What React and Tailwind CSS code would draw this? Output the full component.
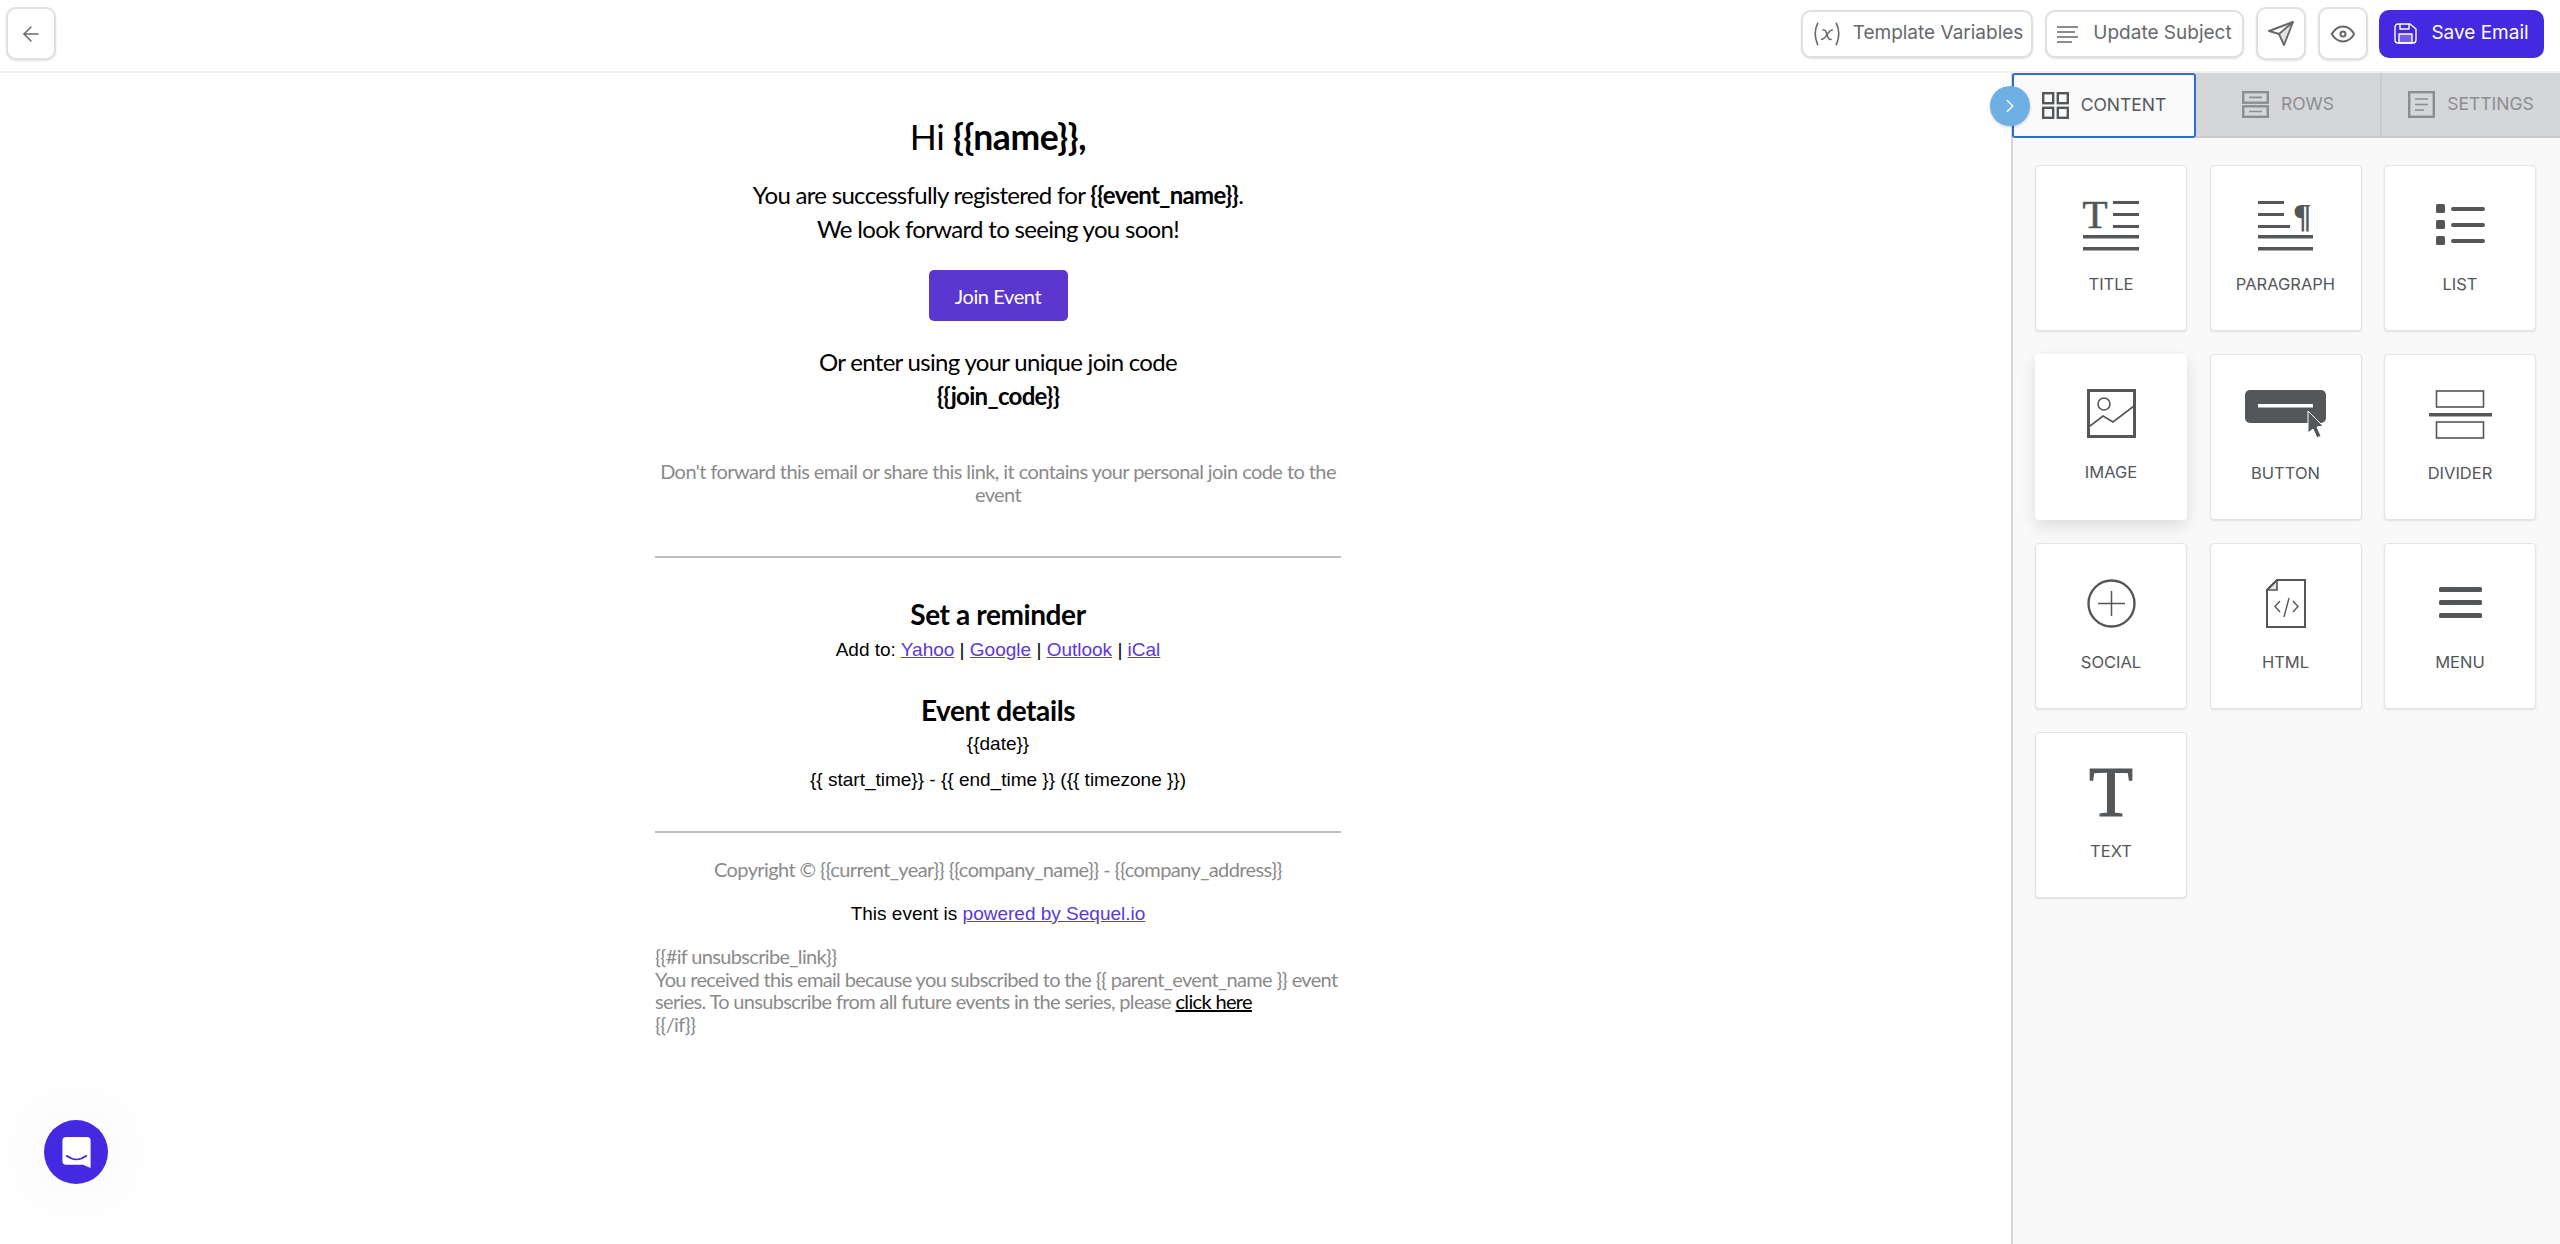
import { ArrowLeft, ChevronRight } from 'lucide-react';

const ICON = '#53575a';
const lato = { fontFamily: 'Lato, sans-serif' };
const arial = { fontFamily: 'Liberation Sans, sans-serif' };

// widget tile icons, drawn on the pixel grid of the tile
function TitleIcon() {
  return (
    <svg width="56" height="50" viewBox="0 0 56 50" fill={ICON} className="overflow-visible">
      <text x="-0.5" y="28" fontFamily="Liberation Serif" fontSize="41" stroke={ICON} strokeWidth="0.6">T</text>
      <rect x="30" y="1" width="26" height="3" />
      <rect x="30" y="13" width="26" height="3" />
      <rect x="30" y="25" width="26" height="3" />
      <rect x="0" y="35" width="56" height="3.5" />
      <rect x="0" y="47" width="56" height="3.5" />
    </svg>
  );
}

function ParagraphIcon() {
  return (
    <svg width="56" height="50" viewBox="0 0 56 50" fill={ICON} className="overflow-visible">
      <rect x="0" y="1" width="26" height="3" />
      <rect x="0" y="13" width="26" height="3" />
      <rect x="0" y="25" width="32" height="3" />
      <text x="35" y="27" fontFamily="Liberation Serif" fontWeight="700" fontSize="34">¶</text>
      <rect x="0" y="35" width="55" height="3.5" />
      <rect x="0" y="47" width="55" height="3.5" />
    </svg>
  );
}

function ListIcon() {
  return (
    <svg width="49" height="42" viewBox="0 0 49 42" fill={ICON}>
      <rect x="0" y="0" width="9" height="9" rx="1.5" />
      <rect x="0" y="16" width="9" height="9" rx="1.5" />
      <rect x="0" y="32" width="9" height="9" rx="1.5" />
      <rect x="15" y="3" width="34" height="4" rx="2" />
      <rect x="15" y="19" width="34" height="4" rx="2" />
      <rect x="15" y="35" width="34" height="4" rx="2" />
    </svg>
  );
}

function ImageIcon() {
  return (
    <svg width="49" height="49" viewBox="0 0 49 49" fill="none" stroke={ICON}>
      <rect x="1.5" y="1.5" width="46" height="46" strokeWidth="3" />
      <circle cx="17" cy="15" r="6" strokeWidth="1.6" />
      <path d="M3 37 L16 27 L26 33 L47 17" strokeWidth="1.6" />
    </svg>
  );
}

function ButtonIcon() {
  return (
    <svg width="82" height="50" viewBox="0 0 82 50">
      <path d="M5 1 H76 A5 5 0 0 1 81 6 V29 A5 5 0 0 1 76 34 H5 A5 5 0 0 1 0 29 V6 A5 5 0 0 1 5 1 Z" fill={ICON} />
      <rect x="13" y="15" width="55" height="3.5" fill="#fff" />
      <path d="M63 22 L63 44 L68 40 L72 49 L76 47 L72 38 L78 37 Z" fill={ICON} stroke="#fff" strokeWidth="1" />
    </svg>
  );
}

function DividerIcon() {
  return (
    <svg width="63" height="49" viewBox="0 0 63 49" fill="none" stroke={ICON} strokeWidth="1.6">
      <rect x="7.5" y="1" width="47" height="16" />
      <rect x="7.5" y="32" width="47" height="16" />
      <rect x="0" y="23" width="63" height="3.5" fill={ICON} stroke="none" />
    </svg>
  );
}

function SocialIcon() {
  return (
    <svg width="49" height="49" viewBox="0 0 49 49" fill="none" stroke={ICON}>
      <circle cx="24.5" cy="24.5" r="23" strokeWidth="2.4" />
      <path d="M24.5 12 V37 M11 24.5 H38" strokeWidth="1.5" />
    </svg>
  );
}

function HtmlIcon() {
  return (
    <svg width="40" height="49" viewBox="0 0 40 49" fill="none" stroke={ICON}>
      <path d="M11 1 H39 V48 H1 V11 Z" strokeWidth="2" />
      <path d="M11 1 V11 H1 Z" fill={ICON} fillOpacity="0.15" strokeWidth="1.6" />
      <path d="M14 22 L9 27.5 L14 33 M27 22 L32 27.5 L27 33 M23 19 L18 38" strokeWidth="1.4" />
    </svg>
  );
}

function MenuIcon() {
  return (
    <svg width="43" height="32" viewBox="0 0 43 32" fill={ICON}>
      <rect x="0" y="0" width="43" height="5" rx="1.5" />
      <rect x="0" y="13" width="43" height="5" rx="1.5" />
      <rect x="0" y="26" width="43" height="5" rx="1.5" />
    </svg>
  );
}

function TextIcon() {
  return (
    <svg width="46" height="50" viewBox="0 0 46 50" fill={ICON} className="overflow-visible">
      <text x="23" y="49" textAnchor="middle" fontFamily="Liberation Serif" fontSize="72" stroke={ICON} strokeWidth="1.2">T</text>
    </svg>
  );
}

const widgets = [
  { label: 'TITLE', icon: TitleIcon },
  { label: 'PARAGRAPH', icon: ParagraphIcon },
  { label: 'LIST', icon: ListIcon },
  { label: 'IMAGE', icon: ImageIcon, raised: true },
  { label: 'BUTTON', icon: ButtonIcon },
  { label: 'DIVIDER', icon: DividerIcon },
  { label: 'SOCIAL', icon: SocialIcon },
  { label: 'HTML', icon: HtmlIcon },
  { label: 'MENU', icon: MenuIcon },
  { label: 'TEXT', icon: TextIcon },
];

function ToolButton({ children, className = '' }) {
  return (
    <button className={`flex items-center justify-center rounded-[10px] border-2 border-[#e0e0e0] bg-white text-[#66696c] shadow-[0_1px_2px_rgba(0,0,0,0.12)] ${className}`}>
      {children}
    </button>
  );
}

function Header() {
  return (
    <header className="flex h-[73px] items-center justify-between border-b-2 border-[#f2f2f2] pb-[4px] pl-[6px] pr-4">
      <ToolButton className="h-[53px] w-[50px]">
        <ArrowLeft size={24} strokeWidth={1.5} />
      </ToolButton>
      <div className="flex items-center gap-3" style={{ fontFamily: 'Inter, sans-serif' }}>
        <ToolButton className="h-[48px] w-[232px] gap-[10px] text-[19px]">
          <svg width="32" height="32" viewBox="0 0 24 24" fill="none" stroke="currentColor" strokeWidth="1.2" strokeLinecap="round">
            <path d="M5 4c-2.5 5 -2.5 10 0 16m14 -16c2.5 5 2.5 10 0 16m-10 -11h1c1 0 1 1 2.016 3.527c.984 2.473 .984 3.473 1.984 3.473h1" />
            <path d="M8 16c1.5 0 3 -2 4 -3.5s2.5 -3.5 4 -3.5" />
          </svg>
          <span>Template Variables</span>
        </ToolButton>
        <ToolButton className="h-[48px] w-[199px] gap-[15px] text-[19px]">
          <svg width="21" height="18" viewBox="0 0 21 18" fill="none" stroke="currentColor" strokeWidth="1.6">
            <path d="M0 2 H21 M0 7 H18 M0 12 H21 M0 17 H15" />
          </svg>
          <span>Update Subject</span>
        </ToolButton>
        <ToolButton className="h-[53px] w-[50px]">
          <svg width="26" height="25" viewBox="-1 -1 26 25" fill="none" stroke="currentColor" strokeWidth="1.9" strokeLinejoin="round">
            <path d="M24 0 L10 12 L15 23 Z" fill="#e3e3e3" />
            <path d="M24 0 L0 9 L10 12" />
          </svg>
        </ToolButton>
        <ToolButton className="h-[53px] w-[50px]">
          <svg width="30" height="30" viewBox="0 0 24 24" fill="none" stroke="currentColor" strokeWidth="1.6">
            <path d="M10 12a2 2 0 1 0 4 0a2 2 0 0 0 -4 0" />
            <path d="M21 12c-2.4 4 -5.4 6 -9 6c-3.6 0 -6.6 -2 -9 -6c2.4 -4 5.4 -6 9 -6c3.6 0 6.6 2 9 6" />
          </svg>
        </ToolButton>
        <button className="ml-[-1px] flex h-[48px] w-[165px] items-center justify-center gap-[14px] rounded-[10px] bg-[#4429e0] text-[19px] text-white">
          <svg width="23" height="21" viewBox="0 0 23 21" fill="none" stroke="currentColor" strokeWidth="1.4" strokeLinejoin="round">
            <path d="M4 1 H16 L22 6 V17 A3 3 0 0 1 19 20 H4 A3 3 0 0 1 1 17 V4 A3 3 0 0 1 4 1 Z" />
            <path d="M6 1 V6 H15 V1" />
            <path d="M5 20 V11 H18 V20 Z" fill="#ffffff" fillOpacity="0.25" />
          </svg>
          <span>Save Email</span>
        </button>
      </div>
    </header>
  );
}

function EmailBody() {
  return (
    <div className="flex justify-center pr-[15px]">
      <div className="w-[686px] text-center tracking-[-0.025em] text-black" style={lato}>
        <h1 className="mt-[44px] text-[35.5px] leading-[40px]">Hi <strong>{'{{name}}'},</strong></h1>
        <p className="mt-[21px] text-[24px] leading-[34px] tracking-[-0.029em]">
          You are successfully registered for <strong>{'{{event_name}}'}</strong>.<br />
          We look forward to seeing you soon!
        </p>
        <a className="mx-auto mt-[24px] flex h-[51px] w-[139px] items-center justify-center rounded-[5px] bg-[#5b37d0] text-[20px] text-white">Join Event</a>
        <p className="mt-[24px] text-[24px] leading-[34px] tracking-[-0.029em]">
          Or enter using your unique join code<br />
          <strong>{'{{join_code}}'}</strong>
        </p>
        <p className="mt-[47px] text-[20px] leading-[23px] tracking-[-0.029em] text-[#8a8a8a]">
          Don't forward this email or share this link, it contains your personal join code to the event
        </p>
        <hr className="mt-[50px] border-t-2 border-[#bdbdbd]" />
        <h2 className="mt-[39px] text-[28px] font-bold leading-[34px]">Set a reminder</h2>
        <p className="mt-[4px] text-[19px] leading-[30px] tracking-normal" style={arial}>
          Add to: <a className="text-[#5b37e0] underline">Yahoo</a> | <a className="text-[#5b37e0] underline">Google</a> | <a className="text-[#5b37e0] underline">Outlook</a> | <a className="text-[#5b37e0] underline">iCal</a>
        </p>
        <h2 className="mt-[28px] text-[28px] font-bold leading-[34px]">Event details</h2>
        <div className="tracking-normal" style={arial}>
          <p className="mt-[2px] text-[19px] leading-[30px]">{'{{date}}'}</p>
          <p className="mt-[6px] text-[19px] leading-[30px]">{'{{ start_time}} - {{ end_time }} ({{ timezone }})'}</p>
        </div>
        <hr className="mt-[36px] border-t-2 border-[#bdbdbd]" />
        <p className="mt-[23px] text-[20px] leading-[26px] tracking-[-0.03em] text-[#8a8a8a]">
          {'Copyright © {{current_year}} {{company_name}} - {{company_address}}'}
        </p>
        <p className="mt-[19px] text-[19px] leading-[26px] tracking-normal" style={arial}>
          This event is <a className="text-[#5b37e0] underline">powered by Sequel.io</a>
        </p>
        <p className="mt-[18px] text-left text-[20px] leading-[22.6px] tracking-[-0.033em] text-[#8a8a8a]">
          {'{{#if unsubscribe_link}}'}<br />
          {'You received this email because you subscribed to the {{ parent_event_name }} event series. To unsubscribe from all future events in the series, please '}
          <a className="text-black underline">click here</a><br />
          {'{{/if}}'}
        </p>
      </div>
    </div>
  );
}

function SidePanel() {
  return (
    <aside className="relative w-[549px] shrink-0 border-l-2 border-[#d5d6d9] bg-[#f9f9f9]" style={{ fontFamily: 'Inter, sans-serif' }}>
      <button className="absolute left-[-23px] top-[13px] z-10 flex h-[40px] w-[40px] items-center justify-center rounded-full bg-[#6fb0e4] text-white shadow-[0_1px_3px_rgba(0,0,0,0.2)]">
        <ChevronRight size={22} strokeWidth={1.5} />
      </button>
      <div className="flex h-[65px] text-[17.5px]">
        <div className="ml-[-1px] flex w-[184px] items-center justify-center gap-3 rounded-[3px] border-2 border-[#2f6bd6] bg-[#fafafa] text-[#53575a]">
          <svg width="27" height="27" viewBox="0 0 27 27" fill="none" stroke="currentColor" strokeWidth="2.4">
            <rect x="1.2" y="1.2" width="10" height="10" />
            <rect x="15.8" y="1.2" width="10" height="10" />
            <rect x="1.2" y="15.8" width="10" height="10" />
            <rect x="15.8" y="15.8" width="10" height="10" />
          </svg>
          <span>CONTENT</span>
        </div>
        <div className="flex w-[186px] items-center justify-center gap-3 border-b-2 border-r-2 border-[#c9cacd] bg-[#d5d6d9] text-[#8b8d90]">
          <svg width="27" height="27" viewBox="0 0 27 27" fill="none" stroke="currentColor" strokeWidth="2.4">
            <rect x="1.2" y="1.2" width="24.6" height="10.5" />
            <rect x="1.2" y="15.3" width="24.6" height="10.5" />
            <path d="M7 6.4 H20 M7 20.5 H20" strokeWidth="1.6" />
          </svg>
          <span>ROWS</span>
        </div>
        <div className="flex flex-1 items-center justify-center gap-3 border-b-2 border-[#c9cacd] bg-[#d5d6d9] text-[#8b8d90]">
          <svg width="27" height="27" viewBox="0 0 27 27" fill="none" stroke="currentColor" strokeWidth="2.4">
            <rect x="1.2" y="1.2" width="24.6" height="24.6" />
            <path d="M7 8 H20 M7 13.5 H20 M7 19 H16" strokeWidth="1.6" />
          </svg>
          <span>SETTINGS</span>
        </div>
      </div>
      <div className="grid grid-cols-[repeat(3,152px)] gap-x-[22.5px] gap-y-[23px] pl-[22px] pt-[27px]">
        {widgets.map((w) => (
          <div
            key={w.label}
            className={`flex h-[166px] flex-col items-center rounded-[4px] bg-white ${w.raised ? 'shadow-[0_6px_16px_rgba(0,0,0,0.12)]' : 'border border-[#e4e4e4] shadow-[0_1px_2px_rgba(0,0,0,0.1)]'}`}
          >
            <div className="flex h-[100px] items-center justify-center pt-[18px]">
              <w.icon />
            </div>
            <div className="mt-[6px] text-[16.5px] leading-[24px] text-[#53575a]">{w.label}</div>
          </div>
        ))}
      </div>
    </aside>
  );
}

export default function App() {
  return (
    <div className="flex h-[1244px] flex-col overflow-hidden bg-white">
      <Header />
      <div className="flex min-h-0 flex-1">
        <main className="min-w-0 flex-1">
          <EmailBody />
        </main>
        <SidePanel />
      </div>
      <button className="fixed left-[44px] top-[1120px] flex h-[64px] w-[64px] items-center justify-center rounded-full bg-[#4429e0] shadow-[0_0_90px_rgba(0,0,0,0.08)]">
        <svg width="29" height="31" viewBox="0 0 30 33">
          <path d="M4 0 H26 A4 4 0 0 1 30 4 V33 L22 29.5 H4 A4 4 0 0 1 0 25.5 V4 A4 4 0 0 1 4 0 Z" fill="#fff" />
          <path d="M4.5 20 C11 25 19 25 25.5 20" fill="none" stroke="#4429e0" strokeWidth="1.8" strokeLinecap="round" />
        </svg>
      </button>
    </div>
  );
}
